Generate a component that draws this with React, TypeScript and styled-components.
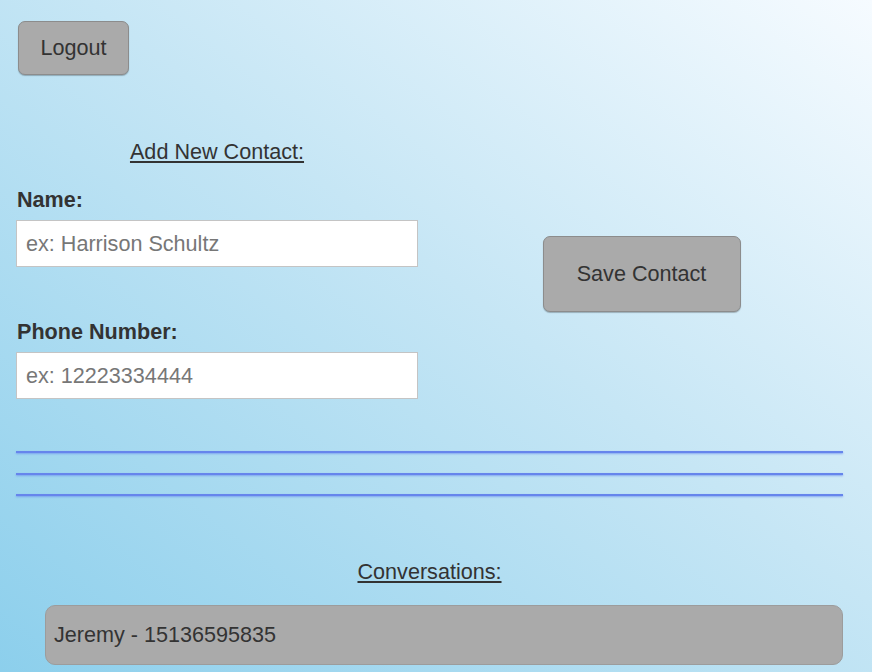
import React from "react";
import styled, { createGlobalStyle } from "styled-components";

const GlobalStyle = createGlobalStyle`
  html, body {
    margin: 0;
    padding: 0;
    min-height: 100%;
  }
  body {
    font-family: "Liberation Sans", Arial, sans-serif;
    color: #333;
    background: linear-gradient(to bottom left, #f6fbff 0%, #c6e6f5 45%, #8ccfec 100%);
    min-height: 672px;
    overflow: hidden;
  }
`;

const Page = styled.div`
  display: flex;
  flex-direction: column;
  padding: 21px 29px 0 16px;
  height: 672px;
  box-sizing: border-box;
`;

const GreyButton = styled.button<{ $w: number; $h: number }>`
  width: ${(p) => p.$w}px;
  height: ${(p) => p.$h}px;
  background: #aaaaaa;
  border: 1px solid #8c8c8c;
  border-radius: 7px;
  box-shadow: 0 1px 1px rgba(0, 0, 0, 0.25);
  font-family: "Liberation Sans", Arial, sans-serif;
  font-size: 21.6px;
  color: #333;
  padding: 0;
  cursor: pointer;
`;

const TopBar = styled.div`
  display: flex;
  padding-left: 2px;
`;

const FormSection = styled.div`
  display: flex;
  align-items: center;
  margin-top: 65px;
`;

const FormColumn = styled.div`
  display: flex;
  flex-direction: column;
  width: 402px;
`;

const ButtonColumn = styled.div`
  flex: 1;
  display: flex;
  justify-content: center;
  padding-left: 22px;
  padding-top: 8px;
`;

const Heading = styled.div`
  font-size: 21.6px;
  text-decoration: underline;
  text-align: center;
  line-height: 24px;
`;

const Label = styled.label<{ $top: number }>`
  font-size: 21.6px;
  font-weight: bold;
  line-height: 24px;
  margin-top: ${(p) => p.$top}px;
  padding-left: 1px;
`;

const Input = styled.input`
  box-sizing: border-box;
  width: 402px;
  height: 47px;
  margin-top: 8px;
  border: 1px solid #c4c4c4;
  background: #fff;
  padding: 0 9px;
  font-family: "Liberation Sans", Arial, sans-serif;
  font-size: 21.6px;
  color: #333;
  &::placeholder {
    color: #777;
  }
`;

const Rules = styled.div`
  display: flex;
  flex-direction: column;
  gap: 19.5px;
  margin-top: 52px;
`;

const Rule = styled.div`
  height: 2px;
  background: #6685ec;
  box-shadow: 0 1px 2px rgba(105, 140, 240, 0.7);
`;

const ConvHeading = styled(Heading)`
  margin-top: 64px;
`;

const ConvList = styled.div`
  display: flex;
  flex-direction: column;
  padding-left: 29px;
  margin-top: 21px;
`;

const ConvItem = styled.div`
  box-sizing: border-box;
  height: 60px;
  display: flex;
  align-items: center;
  padding-left: 8px;
  background: #aaaaaa;
  border: 1px solid #9c9c9c;
  border-radius: 10px;
  font-size: 21.6px;
  color: #333;
`;

export default function App() {
  return (
    <>
      <GlobalStyle />
      <Page>
        <TopBar>
          <GreyButton $w={111} $h={54}>Logout</GreyButton>
        </TopBar>
        <FormSection>
          <FormColumn>
            <Heading>Add New Contact:</Heading>
            <Label $top={24}>Name:</Label>
            <Input placeholder="ex: Harrison Schultz" />
            <Label $top={53}>Phone Number:</Label>
            <Input placeholder="ex: 12223334444" />
          </FormColumn>
          <ButtonColumn>
            <GreyButton $w={198} $h={76}>Save Contact</GreyButton>
          </ButtonColumn>
        </FormSection>
        <Rules>
          <Rule />
          <Rule />
          <Rule />
        </Rules>
        <ConvHeading>Conversations:</ConvHeading>
        <ConvList>
          <ConvItem>Jeremy - 15136595835</ConvItem>
        </ConvList>
      </Page>
    </>
  );
}
